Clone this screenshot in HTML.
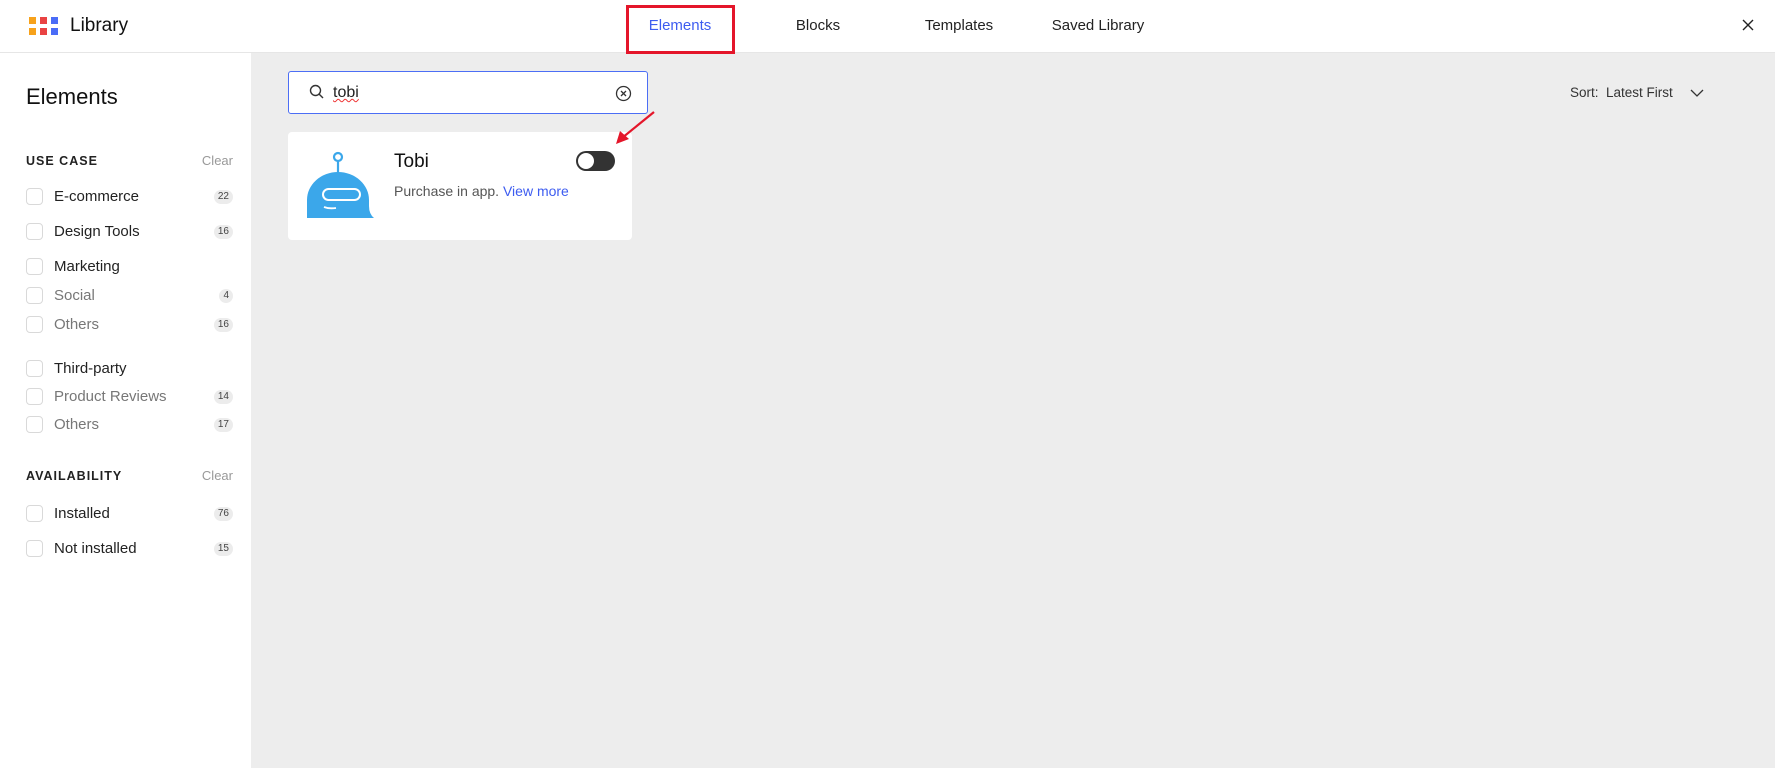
<!DOCTYPE html>
<html><head><meta charset="utf-8"><style>
*{margin:0;padding:0;box-sizing:border-box}
body{width:1775px;height:768px;overflow:hidden;background:#ededed;font-family:"Liberation Sans",sans-serif;color:#1f2330;position:relative}
.hdr{position:absolute;left:0;top:0;width:1775px;height:53px;background:#fff;border-bottom:1px solid #e6e6e6}
.abs{position:absolute;white-space:nowrap}
.nav{font-size:15px;color:#222;transform:translateX(-50%);top:17px}
.side{position:absolute;left:0;top:53px;width:251px;height:715px;background:#fff}
.cb{position:absolute;left:26px;width:17px;height:17px;border:1px solid #d9d9d9;border-radius:4px;background:#fff}
.lbl{position:absolute;left:54px;font-size:15px;color:#222}
.lbl.g{color:#777}
.bd{position:absolute;right:18px;font-size:10px;color:#444;background:#ececec;border-radius:8px;padding:1px 4px;line-height:12px}
.sec{position:absolute;left:26px;font-size:12.5px;font-weight:bold;letter-spacing:1px;color:#222}
.clr{position:absolute;right:18px;font-size:13px;color:#999}
</style></head><body>
<div class="hdr"></div>
<svg class="abs" style="left:29px;top:17px" width="30" height="19">
<rect x="0" y="0" width="7" height="7" fill="#f7a21b"/><rect x="11" y="0" width="7" height="7" fill="#e94343"/><rect x="22" y="0" width="7" height="7" fill="#4a6cf7"/>
<rect x="0" y="11" width="7" height="7" fill="#f7a21b"/><rect x="11" y="11" width="7" height="7" fill="#e94343"/><rect x="22" y="11" width="7" height="7" fill="#4a6cf7"/></svg>
<div class="abs" style="left:70px;top:15px;font-size:19px;color:#111">Library</div>
<div class="abs" style="left:626px;top:5px;width:109px;height:49px;border:3px solid #e4162a"></div>
<div class="abs nav" style="left:680px;color:#3d5cf0">Elements</div>
<div class="abs nav" style="left:818px">Blocks</div>
<div class="abs nav" style="left:959px">Templates</div>
<div class="abs nav" style="left:1098px">Saved Library</div>
<svg class="abs" style="left:1742px;top:19px" width="12" height="12"><path d="M1 1L11 11M11 1L1 11" stroke="#222" stroke-width="1.4"/></svg>

<div class="side">
<div class="abs" style="left:26px;top:31px;font-size:22px;color:#111">Elements</div>
<div class="sec" style="top:101px">USE CASE</div><div class="clr" style="top:100px">Clear</div>
<div class="cb" style="top:135px"></div><div class="lbl" style="top:135px">E-commerce</div><div class="bd" style="top:137px">22</div>
<div class="cb" style="top:170px"></div><div class="lbl" style="top:170px">Design Tools</div><div class="bd" style="top:172px">16</div>
<div class="cb" style="top:205px"></div><div class="lbl" style="top:205px">Marketing</div>
<div class="cb" style="top:234px"></div><div class="lbl g" style="top:234px">Social</div><div class="bd" style="top:236px">4</div>
<div class="cb" style="top:263px"></div><div class="lbl g" style="top:263px">Others</div><div class="bd" style="top:265px">16</div>
<div class="cb" style="top:307px"></div><div class="lbl" style="top:307px">Third-party</div>
<div class="cb" style="top:335px"></div><div class="lbl g" style="top:335px">Product Reviews</div><div class="bd" style="top:337px">14</div>
<div class="cb" style="top:363px"></div><div class="lbl g" style="top:363px">Others</div><div class="bd" style="top:365px">17</div>
<div class="sec" style="top:416px">AVAILABILITY</div><div class="clr" style="top:415px">Clear</div>
<div class="cb" style="top:452px"></div><div class="lbl" style="top:452px">Installed</div><div class="bd" style="top:454px">76</div>
<div class="cb" style="top:487px"></div><div class="lbl" style="top:487px">Not installed</div><div class="bd" style="top:489px">15</div>
</div>

<div class="abs" style="left:288px;top:71px;width:360px;height:43px;background:#fff;border:1px solid #4c6ef5;border-radius:3px"></div>
<svg class="abs" style="left:309px;top:84px" width="16" height="16"><circle cx="6.5" cy="6.5" r="5" fill="none" stroke="#333" stroke-width="1.4"/><path d="M10 10L14 14" stroke="#333" stroke-width="1.4"/></svg>
<div class="abs" style="left:333px;top:84px;font-size:16px;color:#222;text-decoration:underline wavy #e33;text-decoration-thickness:1px">tobi</div>
<svg class="abs" style="left:615px;top:85px" width="17" height="17"><circle cx="8.5" cy="8.5" r="7" fill="none" stroke="#333" stroke-width="1.3"/><path d="M6 6L11 11M11 6L6 11" stroke="#333" stroke-width="1.3"/></svg>

<div class="abs" style="left:288px;top:132px;width:344px;height:108px;background:#fff;border-radius:4px"></div>
<svg class="abs" style="left:300px;top:148px" width="80" height="80">
<circle cx="38" cy="9" r="4" fill="none" stroke="#3ba7ea" stroke-width="2.2"/>
<path d="M38 13V25" stroke="#3ba7ea" stroke-width="2.2"/>
<path d="M7 70V52A31 28 0 0 1 69 52V58Q69 66 74 70Z" fill="#3ba7ea"/>
<rect x="23" y="41" width="37" height="11" rx="5.5" fill="none" stroke="#fff" stroke-width="2"/>
<path d="M24 59Q29 61 36 60" stroke="#fff" stroke-width="1.8" fill="none"/>
</svg>
<div class="abs" style="left:394px;top:151px;font-size:19px;color:#111">Tobi</div>
<div class="abs" style="left:394px;top:183px;font-size:14px;color:#555">Purchase in app. <span style="color:#3d5cf0">View more</span></div>
<div class="abs" style="left:576px;top:151px;width:39px;height:20px;background:#333;border-radius:10px"></div>
<div class="abs" style="left:578px;top:153px;width:16px;height:16px;background:#fff;border-radius:50%"></div>
<svg class="abs" style="left:610px;top:108px" width="50" height="42"><path d="M44 4L12 30" stroke="#e4162a" stroke-width="2.2"/><path d="M6 36L10 23L19 31Z" fill="#e4162a"/></svg>

<div class="abs" style="left:1570px;top:85px;font-size:13.5px;color:#333">Sort:&nbsp; Latest First</div>
<svg class="abs" style="left:1690px;top:89px" width="14" height="9"><path d="M1 1L7 7L13 1" stroke="#333" stroke-width="1.3" fill="none"/></svg>
</body></html>
